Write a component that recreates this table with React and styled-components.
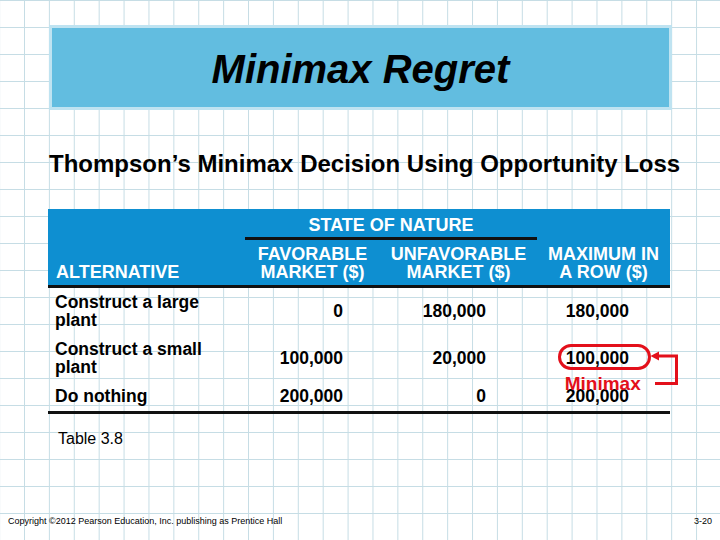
import styled, { createGlobalStyle } from 'styled-components'

const GlobalStyle = createGlobalStyle`
  html,
  body {
    margin: 0;
    padding: 0;
  }

  body {
    font-family: 'Liberation Sans', Arial, sans-serif;
    color: #000;
    background-color: #fff;
    background-image: linear-gradient(to right, #c6dde5 1px, transparent 1px),
      linear-gradient(to bottom, #c6dde5 1px, transparent 1px);
    background-size: 24.9px 27px;
    background-position: -0.9px 0;
  }
`

const rows = [
  { name: 'Construct a large plant', fav: '0', unfav: '180,000', max: '180,000' },
  { name: 'Construct a small plant', fav: '100,000', unfav: '20,000', max: '100,000', minimax: true },
  { name: 'Do nothing', fav: '200,000', unfav: '0', max: '200,000' },
]

const App = () => {
  return (
    <Slide>
      <GlobalStyle />
      <TitleBox>Minimax Regret</TitleBox>
      <Subtitle>Thompson’s Minimax Decision Using Opportunity Loss</Subtitle>

      <Table>
        <Head>
          <StateOfNature>STATE OF NATURE</StateOfNature>
          <HeadCell $align="left">ALTERNATIVE</HeadCell>
          <HeadCell>
            FAVORABLE
            <br />
            MARKET ($)
          </HeadCell>
          <HeadCell>
            UNFAVORABLE
            <br />
            MARKET ($)
          </HeadCell>
          <HeadCell>
            MAXIMUM IN
            <br />A ROW ($)
          </HeadCell>
        </Head>
        <Body>
          {rows.map((row) => (
            <Row key={row.name}>
              <Alternative>{row.name}</Alternative>
              <Num $pr={37}>{row.fav}</Num>
              <Num $pr={51}>{row.unfav}</Num>
              <Num $pr={41}>
                {row.minimax ? (
                  <Circled>
                    {row.max}
                    <Note>Minimax</Note>
                    <Bracket width="32" height="38" viewBox="0 0 32 38">
                      <polyline
                        points="9,6 27.5,6 27.5,33.5 6,33.5"
                        fill="none"
                        stroke="#e3101b"
                        strokeWidth="3"
                      />
                      <polygon points="1.5,6 10,1.5 10,10.5" fill="#e3101b" />
                    </Bracket>
                  </Circled>
                ) : (
                  row.max
                )}
              </Num>
            </Row>
          ))}
        </Body>
      </Table>

      <Caption>Table 3.8</Caption>

      <Footer>
        <span>Copyright ©2012 Pearson Education, Inc. publishing as Prentice Hall</span>
        <span>3-20</span>
      </Footer>
    </Slide>
  )
}

const Slide = styled.main`
  width: 720px;
  height: 540px;
  display: flex;
  flex-direction: column;
  box-sizing: border-box;
`

const TitleBox = styled.h1`
  box-sizing: border-box;
  width: 623px;
  height: 85px;
  margin: 25px 0 0 49px;
  padding-top: 18px;
  border: 3px solid #bfe3f1;
  background-color: #62bde0;
  text-align: center;
  font-size: 40px;
  line-height: 46px;
  font-weight: 700;
  font-style: italic;
`

const Subtitle = styled.h2`
  margin: 40px 0 0 0;
  padding-left: 49px;
  font-size: 24px;
  line-height: 28px;
  font-weight: 700;
`

const Table = styled.section`
  width: 622px;
  margin: 31px 0 0 48px;
`

const columns = '197px 135px 157px 133px'

const Head = styled.div`
  display: grid;
  grid-template-columns: ${columns};
  row-gap: 5px;
  padding-top: 7px;
  background-color: #0e8fd1;
  border-bottom: 3px solid #111;
  color: #fff;
  font-weight: 700;
  font-size: 18px;
  line-height: 18px;
`

const StateOfNature = styled.div`
  grid-row: 1;
  grid-column: 2 / 4;
  padding-bottom: 3px;
  border-bottom: 3px solid #111;
  text-align: center;
`

const HeadCell = styled.div`
  grid-row: 2;
  align-self: end;
  padding: 0 0 3.5px ${({ $align }) => ($align === 'left' ? '8px' : '0')};
  text-align: ${({ $align }) => $align || 'center'};
`

const Body = styled.div`
  border-bottom: 3px solid #111;
`

const Row = styled.div`
  display: grid;
  grid-template-columns: ${columns};
  padding: 5px 0 6px;
  font-weight: 700;
  font-size: 17.5px;
  line-height: 18px;
`

const Alternative = styled.div`
  max-width: 155px;
  padding-left: 7px;
`

const Num = styled.div`
  align-self: center;
  padding-right: ${({ $pr }) => $pr}px;
  text-align: right;
`

const Circled = styled.span`
  position: relative;
  display: inline-block;

  &::before {
    content: '';
    position: absolute;
    left: -8px;
    right: -22px;
    top: -4.5px;
    bottom: -3px;
    border: 3px solid #e3101b;
    border-radius: 13px;
  }
`

const Note = styled.span`
  position: absolute;
  left: -1px;
  top: 25px;
  color: #e3101b;
  font-size: 19px;
  line-height: 20px;
  font-weight: 700;
  white-space: nowrap;
`

const Bracket = styled.svg`
  position: absolute;
  left: 83px;
  top: 1.5px;
`

const Caption = styled.p`
  margin: 16px 0 0 58px;
  font-size: 16px;
  line-height: 18px;
`

const Footer = styled.footer`
  margin-top: auto;
  display: flex;
  justify-content: space-between;
  padding: 0 8px 14px 8px;
  font-size: 9px;
  line-height: 10px;
`

export default App
